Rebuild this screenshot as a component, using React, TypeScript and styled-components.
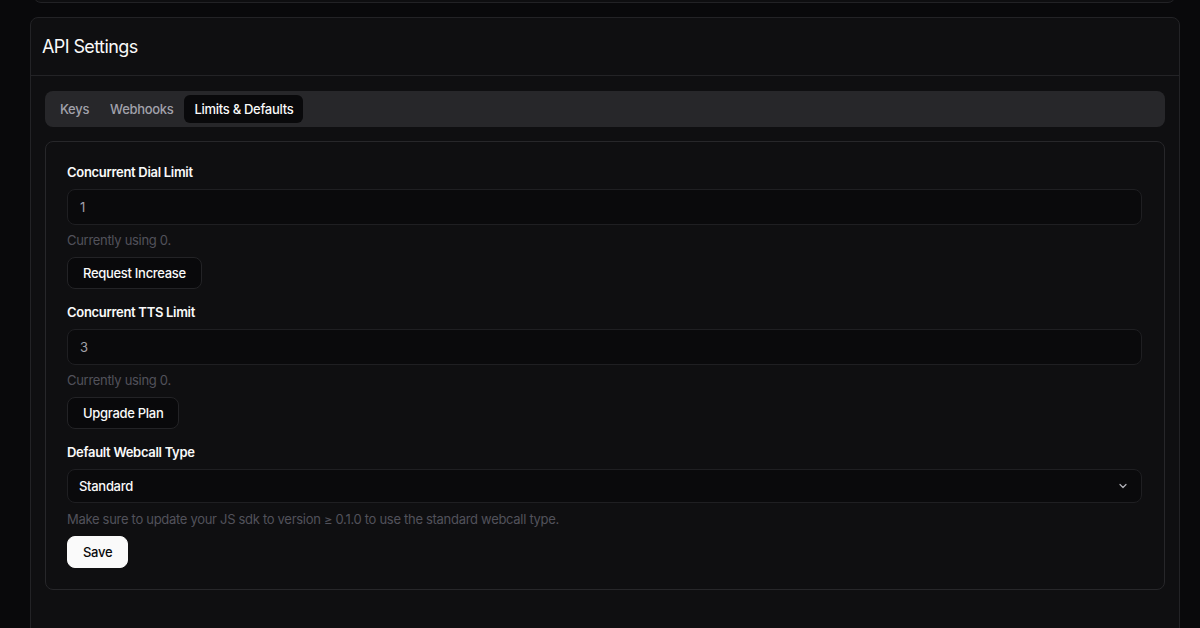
import React from "react";
import styled, { createGlobalStyle } from "styled-components";

const Global = createGlobalStyle`
  html, body {
    margin: 0;
    padding: 0;
    background: #09090b;
    font-family: Inter, "Noto Sans", sans-serif;
    color: #fafafa;
    -webkit-font-smoothing: antialiased;
  }
  * { box-sizing: border-box; }
`;

const Page = styled.div`
  width: 1200px;
  height: 628px;
  overflow: hidden;
  padding: 0 20px 0 30px;
  letter-spacing: -0.3px;
`;

const Scroll = styled.div`
  display: flex;
  flex-direction: column;
  gap: 14px;
  margin-top: -60px;
`;

const PrevCard = styled.div`
  height: 63px;
  margin: 0 4px 0 3px;
  border: 1px solid #222225;
  border-radius: 8px;
  background: #0e0e10;
`;

const Card = styled.section`
  border: 1px solid #232326;
  border-radius: 8px;
  background: #0f0f11;
  min-height: 640px;
`;

const CardHeader = styled.header`
  height: 58px;
  display: flex;
  align-items: center;
  padding: 0 11px;
  border-bottom: 1px solid #232326;
`;

const Title = styled.h2`
  margin: 0;
  font-size: 18px;
  font-weight: 400;
  letter-spacing: -0.6px;
  color: #fafafa;
`;

const CardBody = styled.div`
  padding: 15px 14px;
  display: flex;
  flex-direction: column;
  gap: 14px;
`;

const TabList = styled.div`
  height: 36px;
  display: flex;
  align-items: center;
  padding: 4px;
  border-radius: 8px;
  background: #27272a;
`;

const Tab = styled.button<{ $active?: boolean }>`
  height: 28px;
  padding: 0 10px 0 11px;
  border: none;
  border-radius: 6px;
  font-family: inherit;
  font-size: 13px;
  font-weight: 500;
  letter-spacing: -0.3px;
  cursor: pointer;
  background: ${(p) => (p.$active ? "#09090b" : "transparent")};
  color: ${(p) => (p.$active ? "#fafafa" : "#a1a1aa")};
`;

const Panel = styled.div`
  border: 1px solid #27272a;
  border-radius: 8px;
  background: #0f0f11;
  padding: 20px 22px 21px 21px;
  display: flex;
  flex-direction: column;
  gap: 13px;
`;

const Field = styled.div`
  display: flex;
  flex-direction: column;
  align-items: flex-start;
`;

const Label = styled.label`
  font-size: 13px;
  line-height: 20px;
  font-weight: 600;
  color: #fafafa;
`;

const Input = styled.div`
  margin-top: 7px;
  width: 100%;
  height: 36px;
  display: flex;
  align-items: center;
  padding: 0 12px;
  border: 1px solid #1f1f22;
  border-radius: 8px;
  background: #0a0a0c;
  font-size: 13px;
  color: #a1a1aa;
`;

const Select = styled(Input)`
  height: 34px;
  justify-content: space-between;
  color: #fafafa;
  font-weight: 500;
  padding: 0 12px 0 11px;
`;

const Help = styled.p<{ $gap?: number }>`
  margin: ${(p) => p.$gap ?? 5}px 0 7px;
  font-size: 13px;
  line-height: 20px;
  color: #52525b;
`;

const Button = styled.button<{ $primary?: boolean }>`
  height: 32px;
  padding: 0 15px;
  border-radius: 8px;
  border: 1px solid ${(p) => (p.$primary ? "#fafafa" : "#232326")};
  background: ${(p) => (p.$primary ? "#fafafa" : "#09090b")};
  color: ${(p) => (p.$primary ? "#09090b" : "#fafafa")};
  font-family: inherit;
  font-size: 13px;
  font-weight: 500;
  letter-spacing: -0.3px;
  cursor: pointer;
`;

const Chevron = () => (
  <svg width="12" height="12" viewBox="0 0 24 24" fill="none" stroke="#b4b4bb" strokeWidth="2.4" strokeLinecap="round" strokeLinejoin="round">
    <path d="m6 9 6 6 6-6" />
  </svg>
);

export default function App() {
  return (
    <>
      <Global />
      <Page>
        <Scroll>
          <PrevCard />
          <Card>
            <CardHeader>
              <Title>API Settings</Title>
            </CardHeader>
            <CardBody>
              <TabList>
                <Tab>Keys</Tab>
                <Tab>Webhooks</Tab>
                <Tab $active>Limits &amp; Defaults</Tab>
              </TabList>
              <Panel>
                <Field>
                  <Label>Concurrent Dial Limit</Label>
                  <Input>1</Input>
                  <Help>Currently using 0.</Help>
                  <Button>Request Increase</Button>
                </Field>
                <Field>
                  <Label>Concurrent TTS Limit</Label>
                  <Input>3</Input>
                  <Help>Currently using 0.</Help>
                  <Button>Upgrade Plan</Button>
                </Field>
                <Field>
                  <Label>Default Webcall Type</Label>
                  <Select>
                    <span>Standard</span>
                    <Chevron />
                  </Select>
                  <Help $gap={6}>Make sure to update your JS sdk to version ≥ 0.1.0 to use the standard webcall type.</Help>
                  <Button $primary>Save</Button>
                </Field>
              </Panel>
            </CardBody>
          </Card>
        </Scroll>
      </Page>
    </>
  );
}
